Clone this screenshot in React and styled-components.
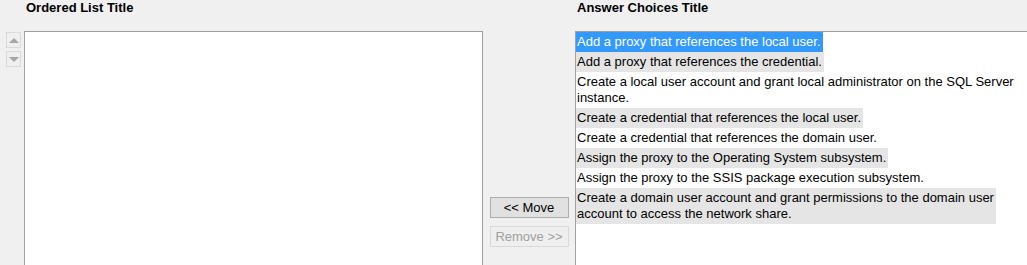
import React from "react";
import styled, { createGlobalStyle } from "styled-components";

const Global = createGlobalStyle`
  html, body {
    margin: 0;
    padding: 0;
    overflow: hidden;
    background: #f0f0f0;
  }
  body {
    font-family: "Liberation Sans", Arial, sans-serif;
    font-size: 13px;
    color: #000;
  }
`;

const Page = styled.div`
  display: flex;
  align-items: stretch;
  width: 1027px;
  height: 265px;
  overflow: hidden;
`;

const Section = styled.div`
  display: flex;
  flex-direction: column;
  flex: ${(p) => (p.$grow ? "1 1 0" : "0 0 auto")};
  min-width: 0;
`;

const Title = styled.div`
  height: 31px;
  padding-left: ${(p) => p.$indent}px;
  font-weight: bold;
  font-size: 13px;
  line-height: 13px;
  padding-top: 1px;
  box-sizing: border-box;
`;

const Row = styled.div`
  display: flex;
  align-items: stretch;
  flex: 1;
`;

const ArrowColumn = styled.div`
  width: 24px;
  display: flex;
  flex-direction: column;
  align-items: flex-start;
  gap: 3px;
  padding: 1px 0 0 6px;
  box-sizing: border-box;
`;

const ArrowButton = styled.div`
  width: 15px;
  height: 16px;
  box-sizing: border-box;
  border: 1px solid #dadada;
  background: #efefef;
  display: flex;
  align-items: center;
  justify-content: center;
`;

const Triangle = styled.div`
  width: 0;
  height: 0;
  border-left: 5px solid transparent;
  border-right: 5px solid transparent;
  ${(p) =>
    p.$up
      ? "border-bottom: 5px solid #a6a6a6;"
      : "border-top: 5px solid #a6a6a6;"}
`;

const ListBox = styled.div`
  flex: 1;
  ${(p) => (p.$width ? `flex: 0 0 ${p.$width}px;` : "")}
  box-sizing: border-box;
  border: 1px solid #a0a0a0;
  border-bottom: none;
  ${(p) => (p.$openRight ? "border-right: none;" : "")}
  background: #fff;
  display: flex;
  flex-direction: column;
  align-items: flex-start;
`;

const Middle = styled.div`
  width: 92px;
  flex: 0 0 92px;
  padding-top: 197px;
  display: flex;
  flex-direction: column;
  align-items: center;
  gap: 8px;
`;

const ActionButton = styled.button`
  width: 79px;
  height: 21px;
  box-sizing: border-box;
  margin: 0;
  padding: 0;
  font-family: "Liberation Sans", Arial, sans-serif;
  font-size: 13px;
  line-height: 19px;
  border: 1px solid ${(p) => (p.disabled ? "#d9d9d9" : "#adadad")};
  background: ${(p) => (p.disabled ? "#efefef" : "#e1e1e1")};
  color: ${(p) => (p.disabled ? "#a0a0a0" : "#000")};
  border-radius: 0;
`;

const Item = styled.div`
  padding: 2px 2px 2px 1px;
  line-height: 16px;
  white-space: nowrap;
  background: ${(p) =>
    p.$selected ? "#3399ff" : p.$alt ? "#e5e5e5" : "transparent"};
  color: ${(p) => (p.$selected ? "#fff" : "#000")};
`;

const choices = [
  ["Add a proxy that references the local user."],
  ["Add a proxy that references the credential."],
  [
    "Create a local user account and grant local administrator on the SQL Server",
    "instance.",
  ],
  ["Create a credential that references the local user."],
  ["Create a credential that references the domain user."],
  ["Assign the proxy to the Operating System subsystem."],
  ["Assign the proxy to the SSIS package execution subsystem."],
  [
    "Create a domain user account and grant permissions to the domain user",
    "account to access the network share.",
  ],
];

export default function App() {
  return (
    <>
      <Global />
      <Page>
        <Section>
          <Title $indent={26}>Ordered List Title</Title>
          <Row>
            <ArrowColumn>
              <ArrowButton>
                <Triangle $up />
              </ArrowButton>
              <ArrowButton>
                <Triangle />
              </ArrowButton>
            </ArrowColumn>
            <ListBox $width={459} />
          </Row>
        </Section>
        <Middle>
          <ActionButton>&lt;&lt; Move</ActionButton>
          <ActionButton disabled>Remove &gt;&gt;</ActionButton>
        </Middle>
        <Section $grow>
          <Title $indent={2}>Answer Choices Title</Title>
          <ListBox $openRight>
            {choices.map((lines, i) => (
              <Item key={i} $selected={i === 0} $alt={i % 2 === 1}>
                {lines.map((l, j) => (
                  <React.Fragment key={j}>
                    {j > 0 && <br />}
                    {l}
                  </React.Fragment>
                ))}
              </Item>
            ))}
          </ListBox>
        </Section>
      </Page>
    </>
  );
}
